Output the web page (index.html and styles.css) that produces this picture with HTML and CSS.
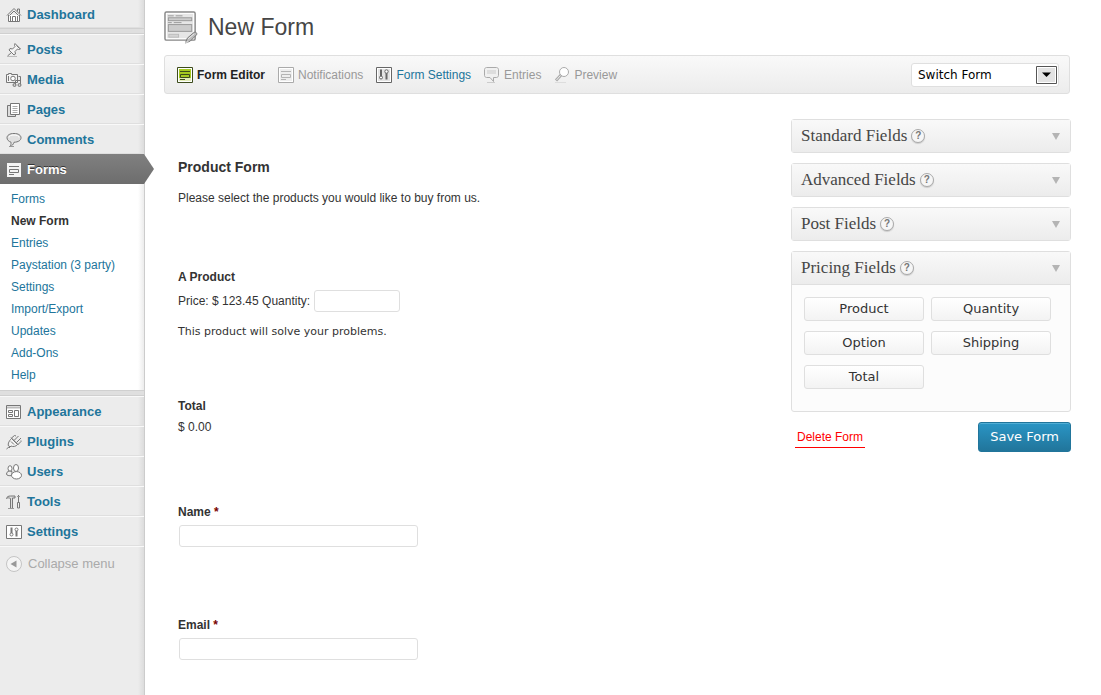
FILE: index.html
```html
<!DOCTYPE html>
<html lang="en">
<head>
    <meta charset="UTF-8">
    <meta name="viewport" content="width=device-width, initial-scale=1.0">
    <title>New Form</title>
    <link rel="stylesheet" href="styles.css">
</head>
<body>
    <nav class="admin-menu">
        <a class="menu-item first" href="#">
            <svg class="icon" viewBox="0 0 16 16"><path d="M2.500 8v6.500h11V8" fill="#fff"/><path d="M1 8.500 8 1.500l7 7M11.500 4.500V2h2v4.500M6.500 14.500v-5h3v5M4.500 14V9M11.500 14V9"/><path d="M3.500 8.500 8 4l4.500 4.500"/></svg>
            Dashboard
        </a>
        <div class="menu-separator"></div>
        <a class="menu-item" href="#">
            <svg class="icon" viewBox="0 0 16 16"><path d="M9 1.500l5.500 5.500-2 .500-1-.500-2.500 2.500.500 2.500-1.500 1L3 8l1-1.500 2.500.500L9 4.500l-.500-1z" fill="#f4f4f4"/><path d="M5.500 10.500 1.500 14M10.500 3.500l3 3"/><path d="M1 14.500h10" stroke="#bbb"/></svg>
            Posts
        </a>
        <a class="menu-item" href="#">
            <svg class="icon" viewBox="0 0 16 16"><path d="M.500 2.500h2v-1h3v1h6v8H.500z" fill="#f4f4f4"/><circle cx="7" cy="6.500" r="2.300" fill="#fff"/><path d="M2.500 4v5M12.500 4.500h2v8M9.500 13V8.500h5"/><circle cx="8.500" cy="13" r="1.500" fill="#ccc"/><circle cx="13.500" cy="13" r="1.500" fill="#ccc"/></svg>
            Media
        </a>
        <a class="menu-item" href="#">
            <svg class="icon" viewBox="0 0 16 16"><path d="M1.500 3.500h8v11h-8z" fill="#ddd"/><path d="M4.500 1.500h9v11h-9z" fill="#fff"/><path d="M6.500 4.500h5M6.500 6.500h5M6.500 8.500h5M6.500 10.500h5" stroke="#aaa"/></svg>
            Pages
        </a>
        <a class="menu-item" href="#">
            <svg class="icon" viewBox="0 0 16 16"><path d="M8 1.500c4.500 0 7 1.800 7 4.300S12.500 10 8 10.300c-.500 2-2 3.700-4 4.200.800-1.200 1.200-2.600 1-4.300C2.700 9.500 1 7.800 1 5.800 1 3.300 3.500 1.500 8 1.500z" fill="#e0e0e0"/><path d="M3 5.500c.500-1.800 2-2.500 5-2.500s4.500.700 5 2.500" stroke="#fff"/><path d="M3 14.500h5" stroke="#999"/></svg>
            Comments
        </a>
        <a class="menu-item current" href="#">
            <svg class="icon" viewBox="0 0 16 16"><path d="M1 1h14v14H1z" fill="#f4f4f4" stroke="none"/><path d="M3 4.500h10" stroke="#777"/><path d="M3.500 7.500h9v3h-9zM3 12.500h5" stroke="#777"/></svg>
            Forms
        </a>
        <ul class="submenu">
            <li><a href="#">Forms</a></li>
            <li><a class="active" href="#">New Form</a></li>
            <li><a href="#">Entries</a></li>
            <li><a href="#">Paystation (3 party)</a></li>
            <li><a href="#">Settings</a></li>
            <li><a href="#">Import/Export</a></li>
            <li><a href="#">Updates</a></li>
            <li><a href="#">Add-Ons</a></li>
            <li><a href="#">Help</a></li>
        </ul>
        <div class="menu-separator"></div>
        <a class="menu-item" href="#">
            <svg class="icon" viewBox="0 0 16 16"><path d="M.500 1.500h14v13H.500z" fill="#fff"/><path d="M1 3.500h13" stroke="#bbb" stroke-width="2"/><path d="M2.500 6.500h4v2h-4zM2.500 10.500h4v2h-4zM8.500 6.500h4v6h-4z"/></svg>
            Appearance
        </a>
        <a class="menu-item" href="#">
            <svg class="icon" viewBox="0 0 16 16"><path d="M5.500 4.500 11.500 10.500c-1.500 2-4.500 2.500-6.500 1.500L3 14M2.500 12c-1-2.500 1-5.500 3-7.500" fill="#f4f4f4"/><path d="M5 3.500 12.500 11M8 6.500 12.500 2M10.500 8.500l4.500-4.500M5.500 4 8.500 1.500l1.500.500M12 10.500l3-3v-1M4 12 .500 15M5 7.500l3 3"/></svg>
            Plugins
        </a>
        <a class="menu-item" href="#">
            <svg class="icon" viewBox="0 0 16 16"><ellipse cx="4" cy="4.500" rx="2" ry="2.800" fill="#fff"/><path d="M6 7.500c-3-1-5.500 0-5.500 2.500 0 1.500 2.500 2 5.500 1.500z" fill="#eee"/><ellipse cx="10" cy="4" rx="2.500" ry="3.500" fill="#fff"/><ellipse cx="10.500" cy="11.300" rx="5" ry="3.700" fill="#fff"/></svg>
            Users
        </a>
        <a class="menu-item" href="#">
            <svg class="icon" viewBox="0 0 16 16"><path d="M.500 4.500c.500-2 2-2.500 4-2.500H9v2H6.500v10.500h-2V4.500C3 3.800 2 3.500.500 4.500z" fill="#ddd"/><path d="M12.500 1v8"/><path d="M11.500 8.500h2v5.500h-2z" fill="#eee"/><path d="M11 2.500h3M2 14.500h6" stroke="#999"/></svg>
            Tools
        </a>
        <a class="menu-item" href="#">
            <svg class="icon" viewBox="0 0 16 16"><path d="M.500 1.500h15v13H.500z" fill="#fff"/><path d="M5.500 3.500v6M10.500 7v5.500" stroke-width="2"/><circle cx="5.500" cy="10.500" r="1.500" fill="#fff"/><circle cx="10.500" cy="5.500" r="1.500" fill="#fff"/></svg>
            Settings
        </a>
        <button class="collapse" type="button">
            <svg class="icon" viewBox="0 0 16 16"><circle cx="8" cy="8" r="7.500" fill="#f4f4f4" stroke="#c4c4c4"/><path d="M10.500 4.500v7L4.500 8z" fill="#999" stroke="none"/></svg>
            Collapse menu
        </button>
    </nav>

    <main class="content">
        <header class="page-title">
            <svg class="title-icon" viewBox="0 0 36 34">
                <rect x="1" y="1.500" width="31" height="29" rx="1.500" fill="#e6e6e6" stroke="#888" stroke-width="1.500"/>
                <rect x="2.500" y="3" width="28" height="26" fill="none" stroke="#fff"/>
                <path d="M4 5.500h6M12 5.500h7M4 12.500h4M10 12.500h8" stroke="#999"/>
                <rect x="4.500" y="7.500" width="24" height="3" fill="#ccc" stroke="#999"/>
                <rect x="4.500" y="14.500" width="24" height="7" fill="#ccc" stroke="#999"/>
                <rect x="5" y="24.500" width="10" height="3" fill="#d4d4d4" stroke="#bbb"/>
                <path d="M22 33.500l2-5 7-6c1.500-1 3.500 1 2.500 2.500l-6.500 6.500z" fill="#bbb" stroke="#777"/>
                <path d="M25 29l6-5M22 33l3-1" stroke="#eee"/>
            </svg>
            <h1>New Form</h1>
        </header>

        <div class="toolbar">
            <a class="tool current" href="#">
                <svg viewBox="0 0 16 16"><path d="M.500.500h15v15H.500z" fill="#fff" stroke="#3d4c1c"/><path d="M2 2h12v9H2z" fill="#a5c920"/><path d="M2 11h12v3H2z" fill="#e3edb8"/><path d="M3 4.500h10M3.500 7.500h9v3h-9zM3 12.500h5" stroke="#3d4c1c"/></svg>
                Form Editor
            </a>
            <a class="tool disabled" href="#">
                <svg viewBox="0 0 16 16"><path d="M.500.500h15v15H.500z" fill="#fff" stroke="#aaa"/><path d="M2 2h12v12H2z" fill="#eee"/><path d="M3 4.500h10M3.500 7.500h9v3h-9zM3 12.500h5" stroke="#b4b4b4"/></svg>
                Notifications
            </a>
            <a class="tool" href="#">
                <svg viewBox="0 0 16 16"><path d="M.500.500h15v15H.500z" fill="#fff" stroke="#666"/><path d="M2 2h12v12H2z" fill="#e4e4e4"/><path d="M5 2.500v7M10.500 6v6.500" stroke="#666" stroke-width="2"/><circle cx="5" cy="10.500" r="1.500" fill="#fff" stroke="#666"/><circle cx="10.500" cy="4.500" r="1.700" fill="#fff" stroke="#666"/></svg>
                Form Settings
            </a>
            <a class="tool disabled" href="#">
                <svg viewBox="0 0 16 16"><path d="M2.500.500h10c1 0 2 1 2 2v6c0 1-1 2-2 2h-3v4L6 10.500H2.500c-1 0-2-1-2-2v-6c0-1 1-2 2-2z" fill="#f0f0f0" stroke="#aaa"/><path d="M3 3h9v4H3z" fill="#ddd"/><path d="M3 15.500h8" stroke="#ccc"/></svg>
                Entries
            </a>
            <a class="tool disabled" href="#">
                <svg viewBox="0 0 16 16"><circle cx="10" cy="5" r="4.500" fill="#fff" stroke="#aaa"/><path d="M7 8 2 13.500" stroke="#aaa" stroke-width="3"/><path d="M6.500 8.500 2.500 13" stroke="#eee"/><path d="M1 15.500h11" stroke="#ddd"/></svg>
                Preview
            </a>
            <div class="switcher">
                <select aria-label="Switch Form">
                    <option>Switch Form</option>
                </select>
                <svg class="switcher-arrow" viewBox="0 0 21 18"><path d="M.500.500h20v17H.500z" fill="#fff" stroke="#555"/><path d="M2 2h17v14H2z" fill="#e3e3e3"/><path d="M6 6.500h9L10.500 11z" fill="#000"/></svg>
            </div>
        </div>

        <div class="columns">
            <form class="form-preview">
                <section class="form-heading">
                    <h2>Product Form</h2>
                    <p>Please select the products you would like to buy from us.</p>
                </section>

                <div class="field product">
                    <h3>A Product</h3>
                    <div class="price-row">
                        <label for="quantity">Price: $ 123.45 Quantity:</label>
                        <input type="text" id="quantity" name="quantity">
                    </div>
                    <p class="description">This product will solve your problems.</p>
                </div>

                <div class="field total">
                    <h3>Total</h3>
                    <p>$ 0.00</p>
                </div>

                <div class="field text">
                    <label for="name">Name <span class="required">*</span></label>
                    <input type="text" id="name" name="name">
                </div>

                <div class="field text">
                    <label for="email">Email <span class="required">*</span></label>
                    <input type="text" id="email" name="email">
                </div>
            </form>

            <aside class="sidebar">
                <section class="panel">
                    <h2>Standard Fields <button class="help" type="button">?</button><span class="toggle"></span></h2>
                </section>
                <section class="panel">
                    <h2>Advanced Fields <button class="help" type="button">?</button><span class="toggle"></span></h2>
                </section>
                <section class="panel">
                    <h2>Post Fields <button class="help" type="button">?</button><span class="toggle"></span></h2>
                </section>
                <section class="panel open">
                    <h2>Pricing Fields <button class="help" type="button">?</button><span class="toggle"></span></h2>
                    <div class="panel-body">
                        <button type="button">Product</button>
                        <button type="button">Quantity</button>
                        <button type="button">Option</button>
                        <button type="button">Shipping</button>
                        <button type="button">Total</button>
                    </div>
                </section>
                <div class="actions">
                    <a class="delete" href="#">Delete Form</a>
                    <button class="save" type="button">Save Form</button>
                </div>
            </aside>
        </div>
    </main>
</body>
</html>
```
FILE: styles.css
```css
* {
    box-sizing: border-box;
}

body {
    display: flex;
    min-height: 100vh;
    margin: 0;
    font-family: "Liberation Sans", Arial, sans-serif;
    font-size: 12px;
    line-height: 18px;
    color: #333;
    background: #fff;
}

h1, h2, h3, p, ul {
    margin: 0;
    padding: 0;
}

a {
    color: #21759b;
    text-decoration: none;
}

button, input, select {
    font: inherit;
}

svg {
    flex: none;
    fill: none;
}

/* Admin menu */
.admin-menu {
    flex: none;
    width: 145px;
    background: linear-gradient(to left, #dcdcdc, #ececec 6px);
    border-right: 1px solid #ccc;
}

.icon {
    width: 16px;
    height: 16px;
    stroke: #777;
}

.menu-item {
    position: relative;
    display: flex;
    align-items: center;
    gap: 5px;
    height: 30px;
    padding: 2px 0 0 6px;
    border-top: 1px solid #f9f9f9;
    border-bottom: 1px solid #dfdfdf;
    font-size: 13px;
    font-weight: bold;
}

.menu-item.first {
    height: 28px;
    border-top: none;
}

.menu-separator {
    height: 6px;
    background: #dfdfdf;
    border-top: 1px solid #d0d0d0;
    border-bottom: 1px solid #d0d0d0;
}

.menu-item.current {
    border: none;
    color: #fff;
    text-shadow: 0 -1px 0 #333;
    background: linear-gradient(#808080, #6d6d6d);
}

.menu-item.current::after {
    content: "";
    position: absolute;
    top: 0;
    left: 100%;
    width: 10px;
    height: 30px;
    background: linear-gradient(#808080, #6d6d6d);
    clip-path: polygon(0 0, 100% 50%, 0 100%);
}

.submenu {
    padding: 4px 0;
    list-style: none;
    background: linear-gradient(to left, #ececec, #fff 6px);
}

.submenu a {
    display: block;
    padding: 2px 11px;
}

.submenu .active {
    font-weight: bold;
    color: #333;
}

.collapse {
    display: flex;
    align-items: center;
    gap: 6px;
    width: 100%;
    height: 34px;
    padding: 0 0 0 6px;
    border: none;
    border-top: 1px solid #f9f9f9;
    font-size: 13px;
    color: #aaa;
    background: none;
    cursor: pointer;
}

/* Content */
.content {
    flex: 1;
    padding: 9px 30px 20px 19px;
}

.page-title {
    display: flex;
    align-items: center;
    gap: 9px;
}

.title-icon {
    width: 35px;
    height: 34px;
}

.page-title h1 {
    font-size: 23px;
    line-height: 36px;
    font-weight: normal;
    color: #464646;
}

.toolbar {
    display: flex;
    align-items: center;
    gap: 13px;
    height: 39px;
    margin: 10px 1px 25px 0;
    padding: 0 10px 0 12px;
    border: 1px solid #dfdfdf;
    border-radius: 3px;
    background: linear-gradient(#f9f9f9, #ececec);
}

.tool {
    display: flex;
    align-items: center;
    gap: 4px;
}

.tool svg {
    width: 16px;
    height: 16px;
}

.tool.current {
    font-weight: bold;
    color: #222;
}

.tool.disabled {
    color: #999;
}

.switcher {
    position: relative;
    margin-left: auto;
}

.switcher select {
    display: block;
    width: 148px;
    height: 24px;
    padding: 0 6px;
    border: 1px solid #dfdfdf;
    border-radius: 3px;
    appearance: none;
    font-family: "DejaVu Sans", Verdana, sans-serif;
    color: #000;
    background: #fff;
}

.switcher-arrow {
    position: absolute;
    top: 3px;
    right: 2px;
    width: 21px;
    height: 18px;
    pointer-events: none;
}

.columns {
    display: flex;
    gap: 20px;
}

/* Form preview */
.form-preview {
    flex: 1;
    padding: 38px 0 0 14px;
}

.form-preview input {
    display: block;
    height: 22px;
    padding: 2px 4px;
    border: 1px solid #dfdfdf;
    border-radius: 3px;
    background: #fff;
}

.form-heading {
    margin-bottom: 61px;
}

.form-heading h2 {
    margin-bottom: 12px;
    font-size: 14px;
    line-height: 20px;
}

.field h3 {
    font-size: 12px;
}

.product {
    margin-bottom: 56px;
}

.price-row {
    display: flex;
    align-items: center;
    gap: 4px;
    margin: 4px 0 11px;
}

.price-row input {
    width: 86px;
}

.description {
    font-family: "DejaVu Sans", Verdana, sans-serif;
    font-size: 11px;
}

.total {
    margin-bottom: 67px;
}

.total p {
    margin-top: 3px;
}

.text {
    margin-bottom: 69px;
}

.text:last-child {
    margin-bottom: 0;
}

.text label {
    font-weight: bold;
}

.text input {
    width: 239px;
    margin: 4px 1px 0;
}

.required {
    color: #790000;
}

/* Field panels */
.sidebar {
    flex: none;
    width: 280px;
}

.panel {
    margin-bottom: 10px;
    border: 1px solid #dfdfdf;
    border-radius: 3px;
    background: #fcfcfc;
}

.panel h2 {
    display: flex;
    align-items: center;
    gap: 4px;
    height: 32px;
    padding: 0 10px 0 9px;
    font-family: "Liberation Serif", Georgia, serif;
    font-size: 17px;
    font-weight: normal;
    color: #464646;
    background: linear-gradient(#f9f9f9, #ececec);
}

.panel.open h2 {
    height: 33px;
    border-bottom: 1px solid #dfdfdf;
}

.help {
    width: 14px;
    height: 14px;
    padding: 0;
    border: 1px solid #aaa;
    border-radius: 50%;
    font-family: "Liberation Sans", Arial, sans-serif;
    font-size: 10px;
    line-height: 12px;
    font-weight: bold;
    color: #777;
    background: #f6f6f6;
    box-shadow: 0 1px 1px #ccc;
}

.toggle {
    margin-left: auto;
    border: 4px solid transparent;
    border-top: 7px solid #b4b4b4;
    border-bottom: none;
}

.panel-body {
    display: grid;
    grid-template-columns: 120px 120px;
    gap: 10px 7px;
    padding: 12px 12px 22px;
}

.panel-body button {
    height: 24px;
    padding: 0;
    border: 1px solid #dfdfdf;
    border-radius: 3px;
    font-family: "DejaVu Sans", Verdana, sans-serif;
    font-size: 13px;
    color: #333;
    background: linear-gradient(#fff, #f3f3f3);
}

.actions {
    display: flex;
    align-items: center;
    justify-content: space-between;
    padding-left: 4px;
}

.delete {
    padding: 2px 2px 1px;
    border-bottom: 1px solid #f00;
    color: #f00;
}

.save {
    height: 30px;
    padding: 0 11px;
    border: 1px solid #21759b;
    border-radius: 3px;
    font-family: "DejaVu Sans", Verdana, sans-serif;
    font-size: 13px;
    color: #fff;
    background: linear-gradient(#2a95c5, #21759b);
    box-shadow: inset 0 1px 0 rgba(120, 200, 230, 0.5);
}
```
